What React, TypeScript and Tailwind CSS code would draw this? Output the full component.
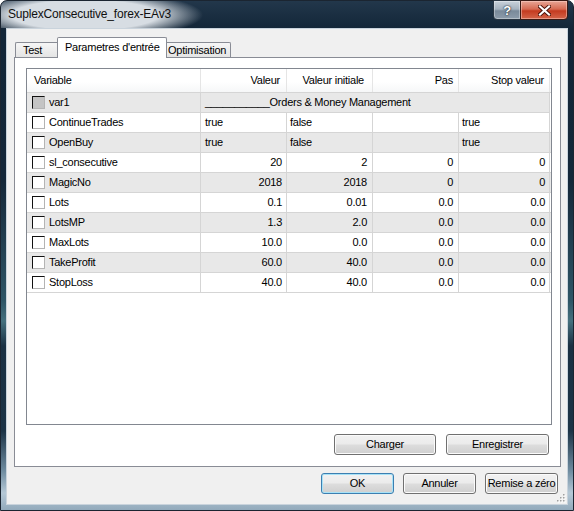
import React from 'react';

type Row = { name: string; v: string; vi: string; pas: string; stop: string; num: boolean };

const rows: Row[] = [
  { name: 'ContinueTrades', v: 'true', vi: 'false', pas: '', stop: 'true', num: false },
  { name: 'OpenBuy', v: 'true', vi: 'false', pas: '', stop: 'true', num: false },
  { name: 'sl_consecutive', v: '20', vi: '2', pas: '0', stop: '0', num: true },
  { name: 'MagicNo', v: '2018', vi: '2018', pas: '0', stop: '0', num: true },
  { name: 'Lots', v: '0.1', vi: '0.01', pas: '0.0', stop: '0.0', num: true },
  { name: 'LotsMP', v: '1.3', vi: '2.0', pas: '0.0', stop: '0.0', num: true },
  { name: 'MaxLots', v: '10.0', vi: '0.0', pas: '0.0', stop: '0.0', num: true },
  { name: 'TakeProfit', v: '60.0', vi: '40.0', pas: '0.0', stop: '0.0', num: true },
  { name: 'StopLoss', v: '40.0', vi: '40.0', pas: '0.0', stop: '0.0', num: true },
];

function CheckBox({ disabled }: { disabled?: boolean }) {
  return (
    <div
      className={`w-[13px] h-[13px] shrink-0 border border-t-[#111111] border-l-[#111111] border-r-[#b4b4b4] border-b-[#b4b4b4] ${
        disabled ? 'bg-[#c4c4c4]' : 'bg-white'
      }`}
    />
  );
}

function Btn({ label, w, primary }: { label: string; w: string; primary?: boolean }) {
  return (
    <button
      className={`${w} h-[21px] rounded-[3px] border whitespace-nowrap flex items-center justify-center px-0 bg-[linear-gradient(180deg,#f2f2f2_0%,#ebebeb_48%,#dddddd_52%,#cfcfcf_100%)] ${
        primary
          ? 'border-[#3c7fb1] shadow-[inset_0_0_0_1px_#a8e2f7]'
          : 'border-[#707070] shadow-[inset_0_0_0_1px_#fbfbfb]'
      }`}
    >
      {label}
    </button>
  );
}

export default function App() {
  const cell = 'border-r border-[#d5d5d5] flex items-center overflow-hidden whitespace-nowrap';
  return (
    <div className="w-[574px] h-[511px] bg-white font-['Liberation_Sans',Arial,sans-serif] text-[11px] leading-[13px] tracking-[-0.25px] text-black">
      <div className="w-full h-full rounded-t-[7px] border border-[#1b2531] flex flex-col bg-[linear-gradient(180deg,#22374b_0px,#132638_28px,#142739_180px,#2e5566_300px,#45707e_320px,#1a3043_345px,#1c3346_430px,#6f8ca0_470px,#b5c8d6_492px,#8ea6b8_511px)]">
        {/* title bar */}
        <div className="h-[27px] shrink-0 flex items-start justify-between">
          <div className="h-full w-[210px] flex items-center pl-[7px] rounded-tl-[6px] bg-[radial-gradient(ellipse_118px_24px_at_84px_14px,#d7dde3_62%,rgba(215,221,227,0)_100%)]">
            <span className="text-[12px] tracking-[-0.2px] text-[#101010]">SuplexConsecutive_forex-EAv3</span>
          </div>
          <div className="flex -mt-px mr-[5px]">
            <div className="w-[28px] h-[20px] rounded-bl-[4px] border border-[#2a3744] flex items-center justify-center bg-[linear-gradient(180deg,#c9d2db_0%,#a6b3c0_45%,#7a8a9a_55%,#8d9cab_100%)] shadow-[inset_0_0_0_1px_rgba(255,255,255,0.35)]">
              <span className="text-white font-bold text-[13px] [text-shadow:0_0_2px_#1a2530,0_0_1px_#1a2530]">?</span>
            </div>
            <div className="w-[48px] h-[20px] -ml-px rounded-br-[4px] border border-[#3a1a14] flex items-center justify-center bg-[linear-gradient(180deg,#e8a696_0%,#d66a52_45%,#c43b20_55%,#d4654a_100%)] shadow-[inset_0_0_0_1px_rgba(255,220,210,0.45)]">
              <svg width="13" height="11" viewBox="0 0 13 11">
                <path d="M2 1.5 L11 9.5 M11 1.5 L2 9.5" stroke="#4a1208" strokeWidth="4" strokeLinecap="square" />
                <path d="M2 1.5 L11 9.5 M11 1.5 L2 9.5" stroke="#ffffff" strokeWidth="2.2" strokeLinecap="square" />
              </svg>
            </div>
          </div>
        </div>

        {/* client */}
        <div className="flex-1 mx-[5px] mb-[5px] border border-[#c9d3dc] bg-[#f0f0f0] flex flex-col relative">
          {/* tabs */}
          <div className="mt-[8px] h-[20px] flex items-end pl-[8px]">
            <div className="w-[42px] h-[15px] border-l border-t border-[#898c95] rounded-tl-[2px] pl-[7px] pt-[1px] bg-[linear-gradient(180deg,#f6f6f6_0%,#e4e4e4_100%)]">
              Test
            </div>
            <div className="relative z-10 w-[110px] h-[21px] -mb-px border border-b-0 border-[#898c95] rounded-t-[2px] bg-white pl-[7px] pt-[3px] whitespace-nowrap">
              Parametres d'entrée
            </div>
            <div className="w-[64px] h-[15px] border-t border-r border-[#898c95] rounded-tr-[2px] pl-[1px] pt-[1px] whitespace-nowrap bg-[linear-gradient(180deg,#f6f6f6_0%,#e4e4e4_100%)]">
              Optimisation
            </div>
          </div>

          {/* panel */}
          <div className="ml-[7px] w-[547px] h-[410px] border border-[#898c95] bg-white flex flex-col pt-[10px] pl-[11px] pr-[8px]">
            <div className="w-[526px] h-[357px] border border-[#828790] bg-white">
              <div className="grid grid-cols-[174px_86px_86px_86px_91px] h-[24px] border-b border-[#d5d5d5] bg-[linear-gradient(180deg,#ffffff_0%,#ffffff_55%,#f6f7f8_100%)]">
                <div className="border-r border-[#e5e5e5] flex items-center pl-[7px]">Variable</div>
                <div className="border-r border-[#e5e5e5] flex items-center justify-end pr-[6px]">Valeur</div>
                <div className="border-r border-[#e5e5e5] flex items-center justify-end pr-[8px]">Valeur initiale</div>
                <div className="border-r border-[#e5e5e5] flex items-center justify-end pr-[5px]">Pas</div>
                <div className="border-r border-[#e5e5e5] flex items-center justify-end pr-[5px]">Stop valeur</div>
              </div>

              <div className="grid grid-cols-[174px_1fr] w-[523px] h-[20px] border-b border-[#d5d5d5] bg-[#e8e8e8]">
                <div className={`${cell} pl-[5px] gap-[4px]`}>
                  <CheckBox disabled />
                  <span>var1</span>
                </div>
                <div className={`${cell} pl-[4px]`}>___________Orders &amp; Money Management</div>
              </div>

              {rows.map((r, i) => (
                <div
                  key={r.name}
                  className={`grid grid-cols-[174px_86px_86px_86px_91px] h-[20px] border-b border-[#d5d5d5] ${
                    i % 2 === 0 ? 'bg-white' : 'bg-[#e8e8e8]'
                  }`}
                >
                  <div className={`${cell} pl-[5px] gap-[4px]`}>
                    <CheckBox />
                    <span>{r.name}</span>
                  </div>
                  <div className={`${cell} ${r.num ? 'justify-end pr-[4px]' : 'pl-[4px]'}`}>{r.v}</div>
                  <div className={`${cell} ${r.num ? 'justify-end pr-[5px]' : 'pl-[3px]'}`}>{r.vi}</div>
                  <div className={`${cell} ${r.num ? 'justify-end pr-[5px]' : 'pl-[3px]'}`}>{r.pas}</div>
                  <div className={`${cell} ${r.num ? 'justify-end pr-[4px]' : 'pl-[3px]'}`}>{r.stop}</div>
                </div>
              ))}
            </div>

            <div className="mt-[9px] flex justify-end gap-[10px] pr-[3px]">
              <Btn label="Charger" w="w-[102px]" />
              <Btn label="Enregistrer" w="w-[103px]" />
            </div>
          </div>

          {/* dialog buttons */}
          <div className="mt-[6px] flex justify-end gap-[9px] pr-[9px]">
            <Btn label="OK" w="w-[73px]" primary />
            <Btn label="Annuler" w="w-[73px]" />
            <Btn label="Remise a zéro" w="w-[73px]" />
          </div>

          {/* size grip */}
          <svg className="absolute right-[1px] bottom-[1px]" width="10" height="10" viewBox="0 0 10 10">
            {[
              [7, 1],
              [7, 4],
              [4, 4],
              [7, 7],
              [4, 7],
              [1, 7],
            ].map(([x, y]) => (
              <g key={`${x}-${y}`}>
                <rect x={x + 1} y={y + 1} width="1.5" height="1.5" fill="#ffffff" />
                <rect x={x} y={y} width="1.5" height="1.5" fill="#a0a0a0" />
              </g>
            ))}
          </svg>
        </div>
      </div>
    </div>
  );
}
